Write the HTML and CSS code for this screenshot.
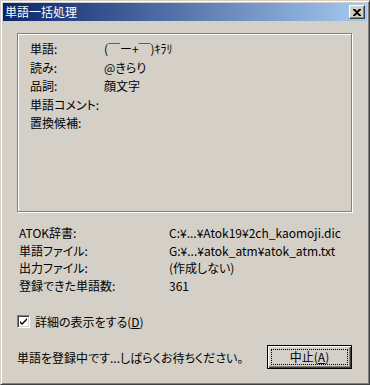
FILE: index.html
```html
<!DOCTYPE html>
<html lang="ja">
<head>
    <meta charset="UTF-8">
    <title>単語一括処理</title>
    <link rel="stylesheet" href="styles.css">
</head>
<body>
    <div class="window">
        <div class="titlebar">
            <span class="title">単語一括処理</span>
            <button class="close-btn" aria-label="閉じる">
                <svg width="8" height="7" viewBox="0 0 8 7"><path d="M0 0h2l2 2 2-2h2v1L5 3.5 8 6v1H6L4 5 2 7H0V6l3-2.5L0 1z" fill="#000"/></svg>
            </button>
        </div>

        <div class="client">
            <div class="group">
                <div class="row"><span class="label">単語:</span><span class="value">(￣ー+￣)ｷﾗﾘ</span></div>
                <div class="row"><span class="label">読み:</span><span class="value">@きらり</span></div>
                <div class="row"><span class="label">品詞:</span><span class="value">顔文字</span></div>
                <div class="row"><span class="label">単語コメント:</span><span class="value"></span></div>
                <div class="row"><span class="label">置換候補:</span><span class="value"></span></div>
            </div>

            <div class="info">
                <div class="row"><span class="label">ATOK辞書:</span><span class="value">C:¥...¥Atok19¥2ch_kaomoji.dic</span></div>
                <div class="row"><span class="label">単語ファイル:</span><span class="value">G:¥...¥atok_atm¥atok_atm.txt</span></div>
                <div class="row"><span class="label">出力ファイル:</span><span class="value">(作成しない)</span></div>
                <div class="row"><span class="label">登録できた単語数:</span><span class="value">361</span></div>
            </div>

            <label class="check">
                <span class="box">
                    <svg width="7" height="7" viewBox="0 0 7 7"><path d="M0 2l2 2 5-5v2L2 6 0 4z" fill="#000" transform="translate(0 1)"/></svg>
                </span>
                <span class="check-text">詳細の表示をする(<u>D</u>)</span>
            </label>

            <div class="footer">
                <span class="status">単語を登録中です...しばらくお待ちください。</span>
                <button class="btn"><span class="focus">中止(<u>A</u>)</span></button>
            </div>
        </div>
    </div>
</body>
</html>
```

FILE: styles.css
```css
* { margin: 0; padding: 0; box-sizing: border-box; }

body {
    font-family: "Noto Sans CJK JP", "Liberation Sans", sans-serif;
    font-size: 12px;
    color: #000;
    background: #d4d0c8;
}

.window {
    width: 370px;
    height: 385px;
    background: #d4d0c8;
    border: 1px solid;
    border-color: #d4d0c8 #404040 #404040 #d4d0c8;
    box-shadow: inset 1px 1px #fff, inset -1px -1px #808080;
    padding: 2px;
    display: flex;
    flex-direction: column;
}

.titlebar {
    height: 18px;
    background: linear-gradient(to right, #0a246a, #a6caf0);
    display: flex;
    align-items: center;
    justify-content: space-between;
    padding: 0 2px 0 2px;
}

.title {
    color: #fff;
    font-size: 12px;
    line-height: 18px;
}

.close-btn {
    width: 16px;
    height: 14px;
    background: #d4d0c8;
    border: 1px solid;
    border-color: #fff #404040 #404040 #fff;
    box-shadow: inset -1px -1px #808080;
    display: flex;
    align-items: center;
    justify-content: center;
}

.client {
    flex: 1;
    padding: 12px 15px 0 14px;
    display: flex;
    flex-direction: column;
    font-feature-settings: "palt";
}

.group {
    height: 179px;
    border: 1px solid #808080;
    box-shadow: 1px 1px #fff, inset 1px 1px #fff;
    padding: 6px 12px;
}

.row {
    display: flex;
    height: 17px;
    line-height: 17px;
    white-space: nowrap;
}

.group .row {
    height: 18.5px;
    line-height: 18.5px;
}

.group .row .label { width: 74px; }

.info {
    margin-top: 12px;
    padding-left: 2px;
}

.info .row { height: 17.5px; }
.info .row .label { width: 150px; }

.check {
    display: flex;
    align-items: center;
    gap: 5px;
    margin-top: 21px;
    height: 13px;
}

.box {
    width: 13px;
    height: 13px;
    background: #fff;
    border: 1px solid;
    border-color: #808080 #fff #fff #808080;
    box-shadow: inset 1px 1px #404040, inset -1px -1px #d4d0c8;
    display: flex;
    align-items: center;
    justify-content: center;
}

.footer {
    margin-top: 17px;
    display: flex;
    align-items: center;
    justify-content: space-between;
}

.btn {
    width: 85px;
    height: 24px;
    background: #d4d0c8;
    border: 1px solid #000;
    box-shadow: inset 1px 1px #fff, inset -1px -1px #404040, inset -2px -2px #808080;
    font-family: inherit;
    font-size: 12px;
    padding: 3px;
    display: flex;
}

.focus {
    flex: 1;
    border: 1px dotted #000;
    display: flex;
    align-items: center;
    justify-content: center;
    line-height: 14px;
}
```
